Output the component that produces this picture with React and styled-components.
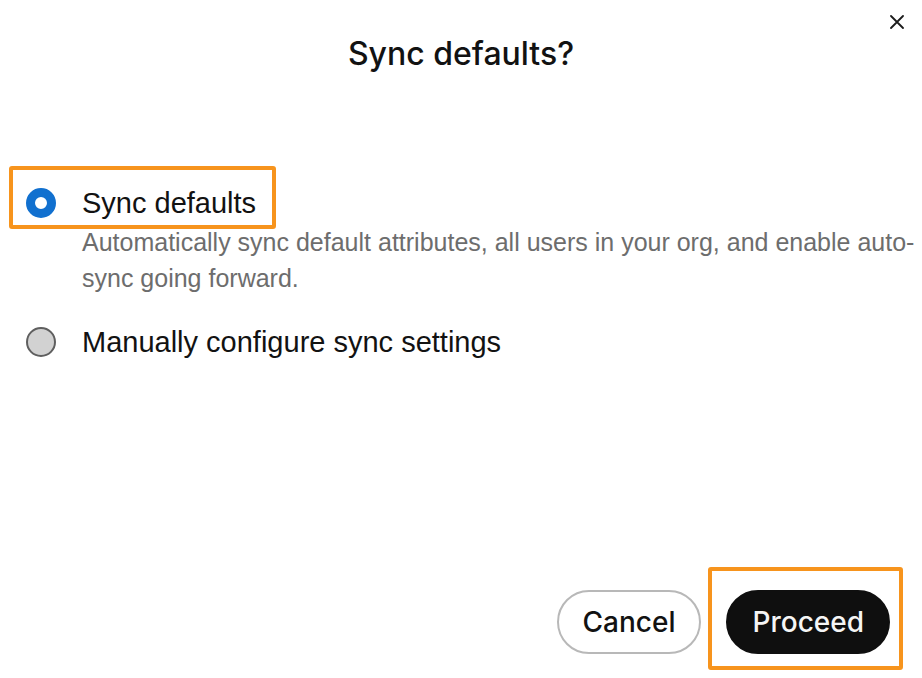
import React, { useState } from "react";
import styled, { createGlobalStyle } from "styled-components";

const GlobalStyle = createGlobalStyle`
  html, body {
    margin: 0;
    padding: 0;
    background: #ffffff;
  }
  body {
    font-family: "Liberation Sans", Arial, sans-serif;
    color: #121212;
  }
`;

const Modal = styled.div`
  width: 922px;
  height: 678px;
  box-sizing: border-box;
  display: flex;
  flex-direction: column;
  overflow: hidden;
`;

const Header = styled.div`
  display: grid;
  grid-template-columns: 1fr auto 1fr;
  padding: 8px 11px 0;
`;

const Title = styled.h2`
  grid-column: 2;
  margin: 26px 0 0;
  font-family: Inter, "Liberation Sans", sans-serif;
  font-size: 32px;
  font-weight: 500;
  line-height: 40px;
  color: #121212;
`;

const CloseButton = styled.button`
  grid-column: 3;
  justify-self: end;
  align-self: start;
  width: 28px;
  height: 28px;
  padding: 0;
  border: none;
  background: transparent;
  display: flex;
  align-items: center;
  justify-content: center;
  cursor: pointer;
`;

const Body = styled.div`
  display: flex;
  flex-direction: column;
  align-items: flex-start;
  padding: 111px 0 0 26px;
`;

// orange annotation frame drawn over the content
const Highlight = styled.div`
  position: relative;
  display: inline-flex;
  &::after {
    content: "";
    position: absolute;
    top: ${(p) => p.$top}px;
    right: ${(p) => p.$right}px;
    bottom: ${(p) => p.$bottom}px;
    left: ${(p) => p.$left}px;
    border: 4px solid #f7941d;
    border-radius: 3px;
    pointer-events: none;
  }
`;

const OptionRow = styled.label`
  display: flex;
  align-items: center;
  gap: 26px;
  cursor: pointer;
`;

const RadioCircle = styled.span`
  width: 30px;
  height: 30px;
  box-sizing: border-box;
  border-radius: 50%;
  flex-shrink: 0;
  background: ${(p) => (p.$checked ? "#ffffff" : "#d2d2d2")};
  border: ${(p) => (p.$checked ? "9px solid #1170cf" : "2px solid #5f5f5f")};
`;

const OptionLabel = styled.span`
  font-size: 29px;
  line-height: 36px;
  color: #121212;
`;

const Description = styled.p`
  margin: 3px 0 28px 56px;
  font-size: 25px;
  line-height: 36px;
  color: #6d6d6d;
`;

const Footer = styled.div`
  margin-top: auto;
  display: flex;
  justify-content: flex-end;
  align-items: center;
  gap: 25px;
  padding: 0 32px 24px 0;
`;

const PillButton = styled.button`
  height: 64px;
  box-sizing: border-box;
  padding: 0 24px;
  border-radius: 32px;
  font-family: Inter, "Liberation Sans", sans-serif;
  font-size: 28px;
  font-weight: 500;
  cursor: pointer;
  border: 2px solid ${(p) => (p.$primary ? "#0f0f0f" : "#b8b8b8")};
  background: ${(p) => (p.$primary ? "#0f0f0f" : "#ffffff")};
  color: ${(p) => (p.$primary ? "#f5f5f5" : "#121212")};
`;

const CloseIcon = () => (
  <svg width="14" height="14" viewBox="0 0 14 14" fill="none">
    <path
      d="M1 1L13 13M13 1L1 13"
      stroke="#1c1c1c"
      strokeWidth="1.8"
      strokeLinecap="round"
    />
  </svg>
);

export default function App() {
  const [choice, setChoice] = useState("defaults");

  return (
    <>
      <GlobalStyle />
      <Modal>
        <Header>
          <Title>Sync defaults?</Title>
          <CloseButton aria-label="Close">
            <CloseIcon />
          </CloseButton>
        </Header>
        <Body>
          <Highlight $top={-19} $right={-20} $bottom={-8} $left={-17}>
            <OptionRow onClick={() => setChoice("defaults")}>
              <RadioCircle $checked={choice === "defaults"} />
              <OptionLabel>Sync defaults</OptionLabel>
            </OptionRow>
          </Highlight>
          <Description>
            Automatically sync default attributes, all users in your org, and
            enable auto-sync going forward.
          </Description>
          <OptionRow onClick={() => setChoice("manual")}>
            <RadioCircle $checked={choice === "manual"} />
            <OptionLabel>Manually configure sync settings</OptionLabel>
          </OptionRow>
        </Body>
        <Footer>
          <PillButton>Cancel</PillButton>
          <Highlight $top={-23} $right={-13} $bottom={-16} $left={-18}>
            <PillButton $primary>Proceed</PillButton>
          </Highlight>
        </Footer>
      </Modal>
    </>
  );
}
